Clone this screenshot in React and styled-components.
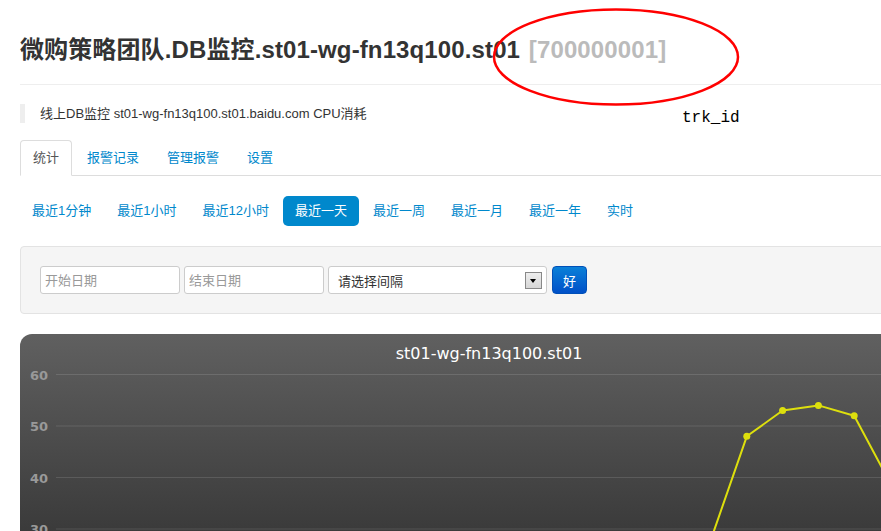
import React from 'react';
import styled, { createGlobalStyle } from 'styled-components';

const GlobalStyle = createGlobalStyle`
  html, body { margin: 0; padding: 0; background: #fff; overflow: hidden; }
  body {
    font-family: "Liberation Sans", Arial, "Noto Sans CJK SC", sans-serif;
    font-size: 13px;
    color: #333;
  }
`;

const tabs = ['统计', '报警记录', '管理报警', '设置'];
const ranges = ['最近1分钟', '最近1小时', '最近12小时', '最近一天', '最近一周', '最近一月', '最近一年', '实时'];

const data = [9, 10, 8, 9, 11, 10, 9, 8, 9, 10, 12, 11, 10, 9, 11, 12, 14, 20, 28, 48, 53, 54, 52, 39];

const STEP = 35.8;
const X0 = 46.6;
const yOf = v => 40.5 + (60 - v) * 5.15;

function App() {
  const pts = data.map((v, i) => [X0 + i * STEP, yOf(v)]);
  return (
    <Page>
      <GlobalStyle />
      <Header>
        <Title>
          微购策略团队.DB监控.st01-wg-fn13q100.st01 <Small>[700000001]</Small>
        </Title>
      </Header>

      <Quote>线上DB监控 st01-wg-fn13q100.st01.baidu.com CPU消耗</Quote>

      <Tabs>
        {tabs.map((t, i) => (
          <Tab key={t} active={i === 0}>{t}</Tab>
        ))}
      </Tabs>

      <Pills>
        {ranges.map(r => (
          <Pill key={r} active={r === '最近一天'}>{r}</Pill>
        ))}
      </Pills>

      <Well>
        <DateInput placeholder="开始日期" />
        <DateInput placeholder="结束日期" />
        <Select>
          <span>请选择间隔</span>
          <Arrow />
        </Select>
        <GoButton>好</GoButton>
      </Well>

      <Chart>
        <svg width="940" height="400">
          <text x="469" y="25" textAnchor="middle" fill="#fff"
            style={{ font: '16px "DejaVu Sans", Verdana, sans-serif' }}>
            st01-wg-fn13q100.st01
          </text>
          {[60, 50, 40, 30, 20, 10, 0].map(v => (
            <g key={v}>
              <line x1="36" x2="940" y1={yOf(v)} y2={yOf(v)} stroke="rgba(255,255,255,0.12)" strokeWidth="1" />
              <text x="28" y={yOf(v) + 5} textAnchor="end" fill="#999"
                style={{ font: 'bold 13px "DejaVu Sans", Verdana, sans-serif' }}>
                {v}
              </text>
            </g>
          ))}
          <polyline points={pts.map(p => p.join(',')).join(' ')} fill="none" stroke="#dddf0d" strokeWidth="2" strokeLinejoin="round" />
          {pts.map(([x, y], i) => (
            <circle key={i} cx={x} cy={y} r="3.5" fill="#dddf0d" />
          ))}
        </svg>
      </Chart>

      <Circled width="252" height="104">
        <ellipse cx="126" cy="51" rx="122" ry="47.5" fill="none" stroke="#f00" strokeWidth="2.5" />
      </Circled>
      <Note>trk_id</Note>
    </Page>
  );
}

export default App;

const Page = styled.div`
  position: relative;
  width: 940px;
  padding: 0 20px;
`;

const Header = styled.div`
  padding: 30px 0 14px;
  border-bottom: 1px solid #eee;
`;

const Title = styled.h1`
  margin: 0;
  font-size: 24px;
  line-height: 40px;
  font-weight: bold;
  letter-spacing: 0.12px;
  color: #333;
  white-space: nowrap;
`;

const Small = styled.span`
  margin-left: 2px;
  color: #bbb;
`;

const Quote = styled.div`
  margin-top: 19px;
  padding-left: 15px;
  border-left: 5px solid #eee;
  line-height: 19px;
  font-size: 13px;
`;

const Tabs = styled.ul`
  display: flex;
  margin: 17px 0 0;
  padding: 0;
  list-style: none;
  border-bottom: 1px solid #ddd;
`;

const Tab = styled.li`
  margin: 0 2px -1px 0;
  padding: 8px 12px;
  line-height: 18px;
  border: 1px solid ${p => (p.active ? '#ddd' : 'transparent')};
  border-bottom-color: transparent;
  border-radius: 4px 4px 0 0;
  background: ${p => (p.active ? '#fff' : 'transparent')};
  color: ${p => (p.active ? '#555' : '#0088cc')};
  cursor: pointer;
`;

const Pills = styled.ul`
  display: flex;
  margin: 20px 0 0;
  padding: 0;
  list-style: none;
`;

const Pill = styled.li`
  margin-right: 2px;
  padding: 5px 12px;
  line-height: 20px;
  border-radius: 5px;
  background: ${p => (p.active ? '#0088cc' : 'transparent')};
  color: ${p => (p.active ? '#fff' : '#0088cc')};
  cursor: pointer;
`;

const Well = styled.div`
  display: flex;
  align-items: center;
  gap: 4px;
  margin-top: 20px;
  padding: 19px;
  background: #f5f5f5;
  border: 1px solid #e3e3e3;
  border-radius: 4px;
`;

const DateInput = styled.input`
  box-sizing: border-box;
  width: 140px;
  height: 28px;
  padding: 4px;
  border: 1px solid #ccc;
  border-radius: 3px;
  background: #fff;
  font: 13px "Liberation Sans", "Noto Sans CJK SC", sans-serif;
  color: #555;
  &::placeholder { color: #999; }
`;

const Select = styled.div`
  box-sizing: border-box;
  display: flex;
  align-items: center;
  justify-content: space-between;
  width: 219px;
  height: 28px;
  padding: 0 4px 0 9px;
  border: 1px solid #ccc;
  border-radius: 3px;
  background: #fff;
  color: #333;
`;

const Arrow = styled.span`
  box-sizing: border-box;
  position: relative;
  width: 17px;
  height: 17px;
  border: 1px solid #888;
  background: linear-gradient(#eee, #d6d6d6);
  &::after {
    content: '';
    position: absolute;
    left: 4px;
    top: 6px;
    border-left: 3.5px solid transparent;
    border-right: 3.5px solid transparent;
    border-top: 4px solid #000;
  }
`;

const GoButton = styled.button`
  box-sizing: border-box;
  width: 35px;
  height: 28px;
  margin-left: 1px;
  border: 1px solid #0050b8;
  border-radius: 4px;
  background: linear-gradient(#0a80d8, #0050c8);
  color: #fff;
  font: 13px "Noto Sans CJK SC", sans-serif;
  cursor: pointer;
`;

const Chart = styled.div`
  margin-top: 20px;
  height: 400px;
  border-radius: 12px 12px 0 0;
  overflow: hidden;
  background: linear-gradient(#606060, #141414);
  svg { display: block; }
`;

const Circled = styled.svg`
  position: absolute;
  left: 490px;
  top: 6px;
  pointer-events: none;
`;

const Note = styled.div`
  position: absolute;
  left: 682px;
  top: 108px;
  font: 16px/20px "Liberation Mono", "Courier New", monospace;
  color: #000;
`;
